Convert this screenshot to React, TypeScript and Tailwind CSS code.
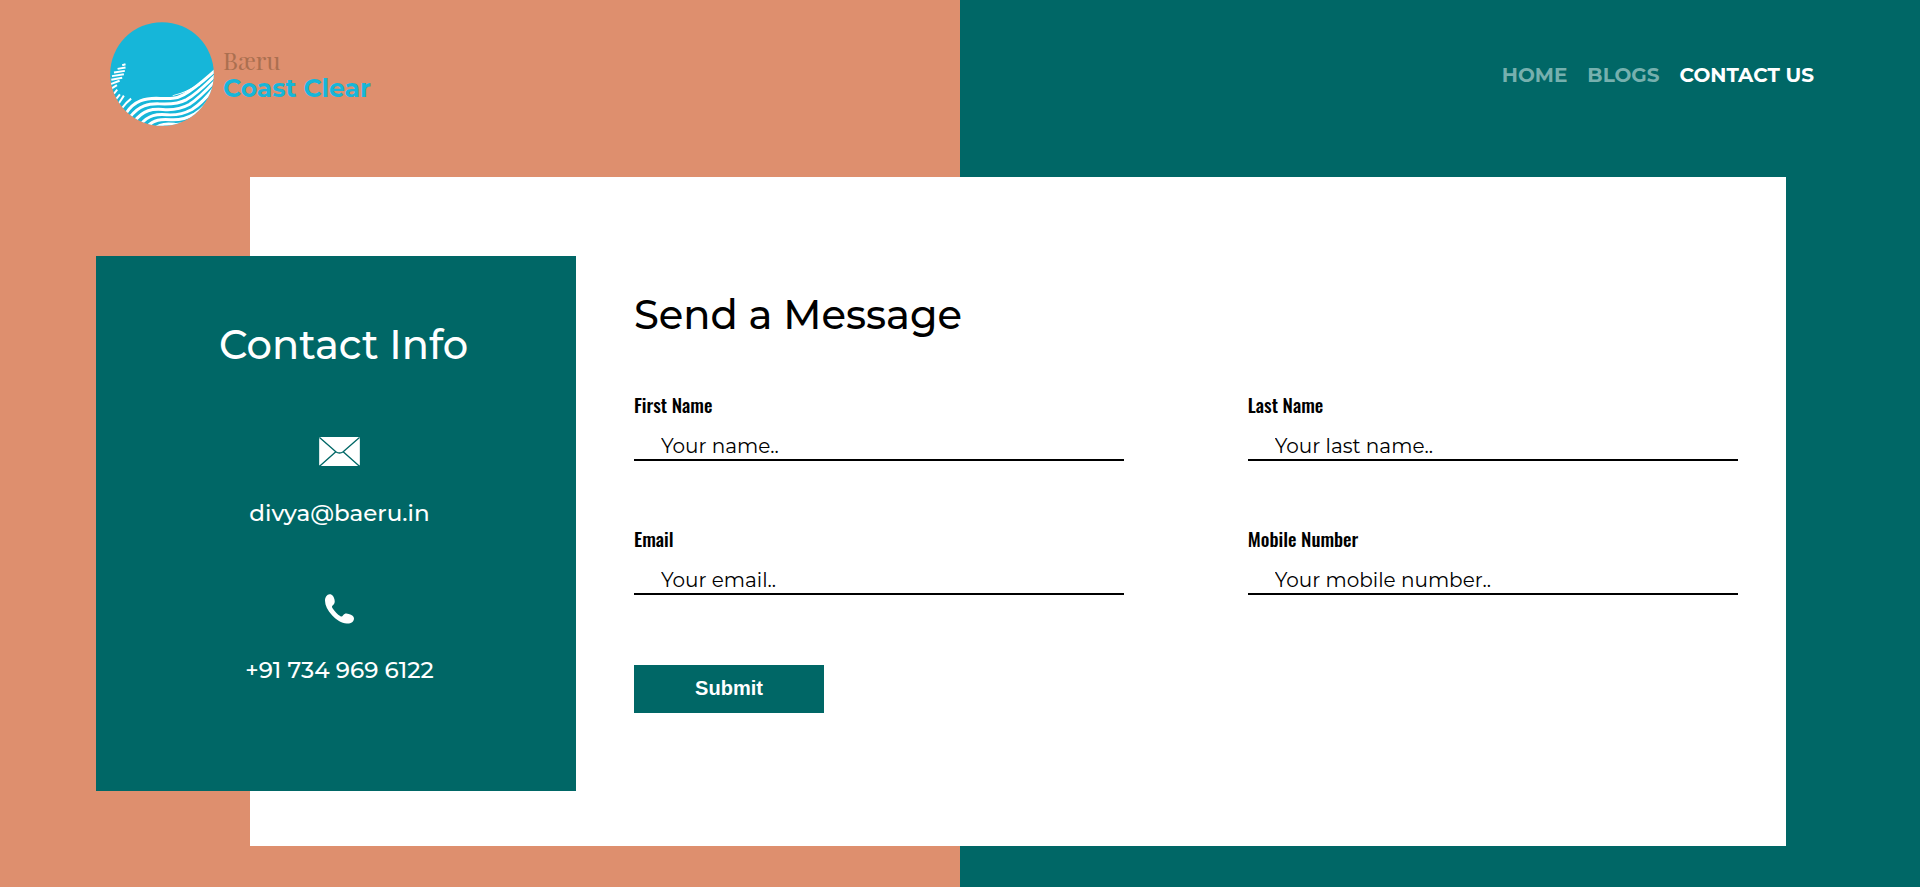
import React from 'react';

const waves = [
  'M78 298 C104 258 138 252 170 252 C205 253 228 256 254 241 C288 222 316 196 348 168',
  'M90 310 C118 272 148 268 180 269 C215 271 238 269 262 256 C296 236 318 212 348 184',
  'M104 322 C132 286 158 284 190 286 C225 289 246 284 270 271 C300 252 322 228 348 200',
  'M122 332 C148 301 172 300 202 302 C234 304 256 298 278 286 C304 270 326 246 348 217',
  'M140 340 C164 316 184 315 214 317 C244 319 264 312 286 300 C306 288 328 264 346 236',
  'M164 344 C184 329 200 329 226 331 C250 332 272 325 294 312 C310 302 324 288 340 260',
];

const ticks = [
  'M67 152 L77 149',
  'M53 163 L77 159',
  'M42 174 L75 169',
  'M36 185 L72 179',
  'M34 196 L67 190',
  'M32 209 L59 199',
  'M34 223 L51 212',
  'M42 238 L52 226',
  'M49 254 L60 240',
  'M57 267 L72 244',
  'M67 281 Q80 264 94 253',
];

function LogoMark() {
  return (
    <svg viewBox="30 21 315 315" className="size-26 shrink-0" aria-hidden="true">
      <clipPath id="disc">
        <circle cx="187.5" cy="178.5" r="157" />
      </clipPath>
      <g clipPath="url(#disc)" fill="none" stroke="#fff">
        <rect x="30" y="21" width="315" height="315" fill="#16b6d9" stroke="none" />
        <path d="M220 243 Q262 232 300 207 L304 212 Q262 236 220 245 Z" fill="#fff" stroke="none" />
        {waves.map((d) => (
          <path key={d} d={d} strokeWidth="9" />
        ))}
        {ticks.map((d) => (
          <path key={d} d={d} strokeWidth="6" />
        ))}
      </g>
    </svg>
  );
}

function MailIcon() {
  return (
    <svg viewBox="0 0 122 87" className="h-[29px] w-[41px]" aria-hidden="true">
      <rect width="122" height="87" rx="5" fill="#fff" />
      <path
        d="M2 2 L50 44 Q61 52 72 44 L120 2 M50 44 L2 87 M72 44 L120 87"
        fill="none"
        stroke="#006766"
        strokeWidth="4"
      />
    </svg>
  );
}

function PhoneIcon() {
  return (
    <svg viewBox="0 0 88 90" className="h-[30px] w-[29px]" aria-hidden="true">
      <path
        d="M14 0 C23 0 27 8 29 17 C31 27 28 30 23 34 C20 37 21 40 24 44 C31 54 38 61 46 66 C50 69 52 68 55 64 C59 58 65 57 72 60 C82 63 88 66 88 74 C88 84 78 90 66 89 C50 88 34 78 22 65 C8 49 0 34 0 20 C0 9 6 0 14 0 Z"
        fill="#fff"
      />
    </svg>
  );
}

const links = [
  { label: 'HOME', active: false },
  { label: 'BLOGS', active: false },
  { label: 'CONTACT US', active: true },
];

const fields = [
  { id: 'first-name', label: 'First Name', type: 'text', placeholder: 'Your name..' },
  { id: 'last-name', label: 'Last Name', type: 'text', placeholder: 'Your last name..' },
  { id: 'email', label: 'Email', type: 'email', placeholder: 'Your email..' },
  { id: 'mobile', label: 'Mobile Number', type: 'tel', placeholder: 'Your mobile number..' },
];

export default function App() {
  return (
    <div className="min-h-screen bg-[linear-gradient(to_right,#de8f6e_50%,#006766_50%)] pb-[42px] font-['Montserrat','Inter',sans-serif]">
      <header className="flex items-center justify-between pt-[22px] pr-[106px] pl-[110px]">
        <a href="#" className="flex items-center gap-[9px]">
          <LogoMark />
          <span className="flex flex-col gap-0.5 pt-0.5">
            <span className="font-['Playfair_Display','Liberation_Serif',serif] text-2xl leading-6 text-[#ab6f50]">
              Bæru
            </span>
            <span className="text-[25px] leading-7 font-bold text-[#16b6d9]">Coast Clear</span>
          </span>
        </a>
        <nav className="flex gap-5 pt-0.5 text-xl font-bold">
          {links.map((link) => (
            <a key={link.label} href="#" className={link.active ? 'text-white' : 'text-[#76b0ae]'}>
              {link.label}
            </a>
          ))}
        </nav>
      </header>

      <main className="mt-[51px] mr-[7%] ml-[13%] flex items-start bg-white pb-[55px]">
        <aside className="mt-[79px] -ml-[10%] flex w-[31.25%] shrink-0 flex-col items-center bg-[#006766] pt-[59px] pb-[103px] text-white">
          <h2 className="pl-[15px] text-[40px] leading-[60px] font-medium">Contact Info</h2>
          <div className="mt-[62px] flex flex-col items-center gap-[29px] pl-[7px] text-[23px] leading-9 font-medium">
            <MailIcon />
            <p>divya@baeru.in</p>
          </div>
          <div className="mt-[63px] flex flex-col items-center gap-7 pl-[7px] text-[23px] leading-9 font-medium">
            <PhoneIcon />
            <p>+91 734 969 6122</p>
          </div>
        </aside>

        <form className="mr-12 ml-[58px] flex-1 pt-[108px]" onSubmit={(e) => e.preventDefault()}>
          <h1 className="text-[40px] leading-[60px] font-medium">Send a Message</h1>
          <div className="mt-[43px] grid grid-cols-2 gap-x-[124px] gap-y-[61px]">
            {fields.map((field) => (
              <div key={field.id} className="flex flex-col">
                <label
                  htmlFor={field.id}
                  className="font-['Oswald','Roboto_Condensed',sans-serif] text-[19px] leading-8 font-medium"
                >
                  {field.label}
                </label>
                <input
                  id={field.id}
                  type={field.type}
                  placeholder={field.placeholder}
                  className="h-[41px] w-full border-b-2 border-black pt-3 pl-[27px] text-xl text-black outline-none placeholder:text-black"
                />
              </div>
            ))}
          </div>
          <button
            type="submit"
            className="mt-[70px] h-12 w-[190px] bg-[#006766] pb-[3px] font-['Liberation_Sans',sans-serif] text-xl font-bold text-white"
          >
            Submit
          </button>
        </form>
      </main>
    </div>
  );
}
